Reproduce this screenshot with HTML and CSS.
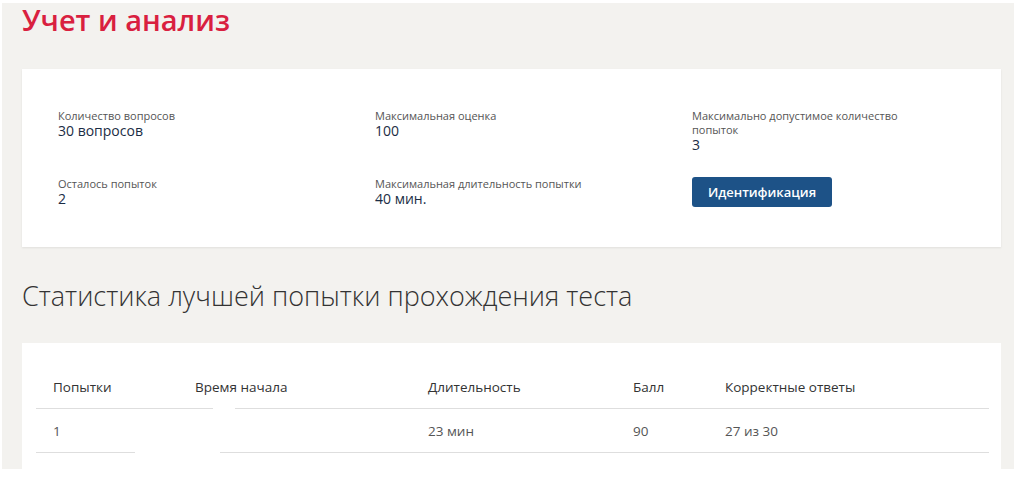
FILE: index.html
```html
<!DOCTYPE html>
<html lang="ru">
<head>
<meta charset="utf-8">
<title>Учет и анализ</title>
<link rel="stylesheet" href="styles.css">
</head>
<body>
<div class="page">
  <h1 class="title">Учет и анализ</h1>

  <section class="card info">
    <div class="info-grid">
      <div class="item">
        <div class="label">Количество вопросов</div>
        <div class="value">30 вопросов</div>
      </div>
      <div class="item">
        <div class="label">Максимальная оценка</div>
        <div class="value">100</div>
      </div>
      <div class="item item-narrow">
        <div class="label">Максимально допустимое количество попыток</div>
        <div class="value">3</div>
      </div>
      <div class="item">
        <div class="label">Осталось попыток</div>
        <div class="value">2</div>
      </div>
      <div class="item">
        <div class="label">Максимальная длительность попытки</div>
        <div class="value">40 мин.</div>
      </div>
      <div class="item">
        <button class="btn" type="button">Идентификация</button>
      </div>
    </div>
  </section>

  <h2 class="subtitle">Статистика лучшей попытки прохождения теста</h2>

  <section class="card stats">
    <table class="table">
      <colgroup>
        <col class="c1"><col class="c2"><col class="c3"><col class="c4"><col class="c5">
      </colgroup>
      <thead>
        <tr>
          <th>Попытки</th>
          <th>Время начала</th>
          <th>Длительность</th>
          <th>Балл</th>
          <th>Корректные ответы</th>
        </tr>
      </thead>
      <tbody>
        <tr>
          <td>1</td>
          <td></td>
          <td>23 мин</td>
          <td>90</td>
          <td>27 из 30</td>
        </tr>
      </tbody>
    </table>
    <span class="redact redact-a"></span>
    <span class="redact redact-b"></span>
  </section>
</div>
</body>
</html>
```

FILE: styles.css
```css
html, body {
  margin: 0;
  padding: 0;
  background: #ffffff;
}

body {
  font-family: "Open Sans", "Noto Sans", sans-serif;
  color: #333;
}

.page {
  width: 979px;
  margin: 3px 0 0 2px;
  padding: 0 13px 0 20px;
  background: #f3f2ef;
}

.title {
  margin: 0 0 32px;
  font-size: 29px;
  line-height: 34px;
  font-weight: 600;
  color: #d9203f;
}

.card {
  background: #fff;
  box-shadow: 0 1px 2px rgba(0, 0, 0, 0.08);
}

.info {
  padding: 40px 0 40px 36px;
}

.info-grid {
  display: grid;
  grid-template-columns: 317px 317px 1fr;
  row-gap: 25px;
}

.item-narrow {
  max-width: 236px;
}

.label {
  font-size: 11px;
  line-height: 14px;
  color: #555;
}

.value {
  font-size: 14px;
  line-height: 15px;
  color: #1b2d45;
}

.btn {
  display: block;
  width: 140px;
  height: 30px;
  padding: 0;
  border: 0;
  border-radius: 3px;
  background: #1d5287;
  color: #fff;
  font-family: "Open Sans", "Noto Sans", sans-serif;
  font-size: 13px;
  font-weight: 600;
}

.subtitle {
  margin: 33px 0 31px;
  font-size: 27px;
  line-height: 32px;
  font-weight: 300;
  color: #333;
}

.stats {
  position: relative;
  height: 104px;
  padding: 22px 12px 0 14px;
  box-shadow: none;
}

.table {
  width: 100%;
  border-collapse: collapse;
  table-layout: fixed;
}

.c1 { width: 142px; }
.c2 { width: 233px; }
.c3 { width: 205px; }
.c4 { width: 92px; }

.table th,
.table td {
  height: 43px;
  padding: 0 17px;
  text-align: left;
  vertical-align: middle;
  border-bottom: 1px solid #dedede;
  font-size: 13.5px;
  line-height: 16px;
}

.table th {
  font-weight: 400;
  color: #333;
}

.table td {
  color: #555;
}

.redact {
  position: absolute;
  background: #fff;
  height: 3px;
}

.redact-a {
  left: 191px;
  top: 64px;
  width: 22px;
}

.redact-b {
  left: 113px;
  top: 108px;
  width: 85px;
}
```
